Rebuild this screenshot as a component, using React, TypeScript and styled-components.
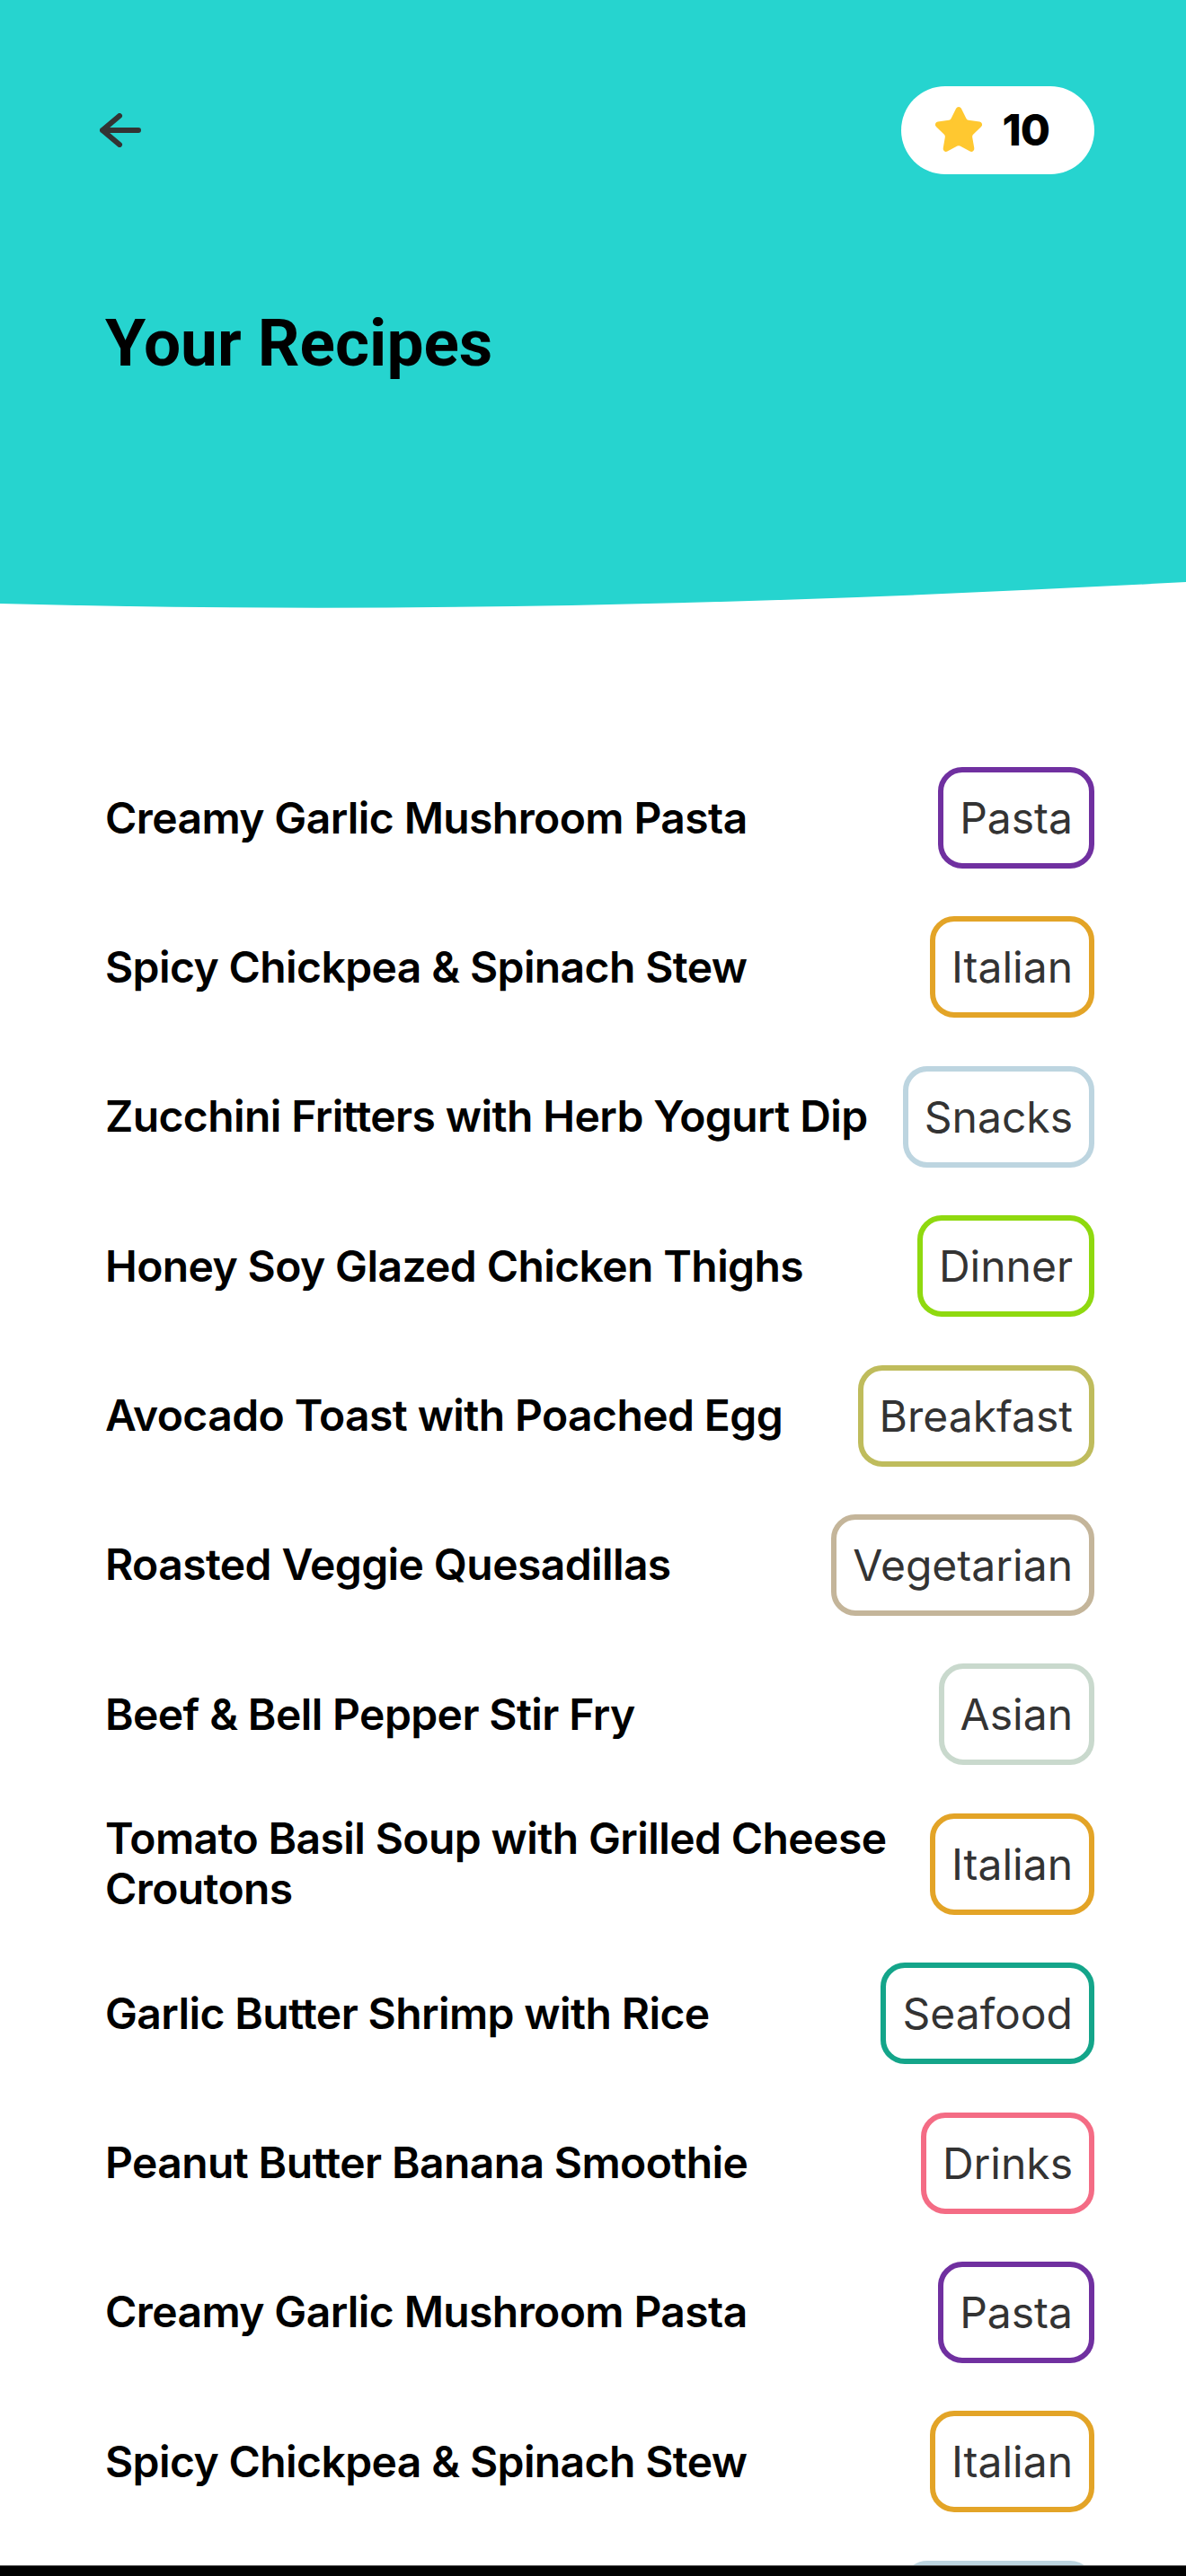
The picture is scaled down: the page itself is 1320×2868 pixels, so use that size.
import React from "react";
import styled, { createGlobalStyle } from "styled-components";

const GlobalStyle = createGlobalStyle`
  html, body {
    margin: 0;
    padding: 0;
    background: #ffffff;
  }
  * { box-sizing: border-box; }
`;

const Page = styled.div`
  position: relative;
  height: 100vh;
  overflow: hidden;
  background: #ffffff;
  font-family: Inter, "Noto Sans", sans-serif;
`;

const Header = styled.header`
  background: #26d4cf;
  padding: 96px 102px 222px 117px;
`;

const TopBar = styled.div`
  display: flex;
  align-items: center;
  justify-content: space-between;
`;

const BackButton = styled.button`
  display: flex;
  align-items: center;
  justify-content: center;
  margin-left: -6px;
  padding: 0;
  border: none;
  background: transparent;
  cursor: pointer;
`;

const PointsBadge = styled.div`
  display: flex;
  align-items: center;
  gap: 20px;
  height: 98px;
  padding: 0 50px 0 35px;
  border-radius: 49px;
  background: #ffffff;
`;

const PointsValue = styled.span`
  font-family: Inter, sans-serif;
  font-weight: 800;
  font-size: 48px;
  letter-spacing: -1px;
  color: #000000;
  line-height: 1;
`;

const Title = styled.h1`
  margin: 144px 0 0;
  font-family: Roboto, "Liberation Sans", sans-serif;
  font-weight: 700;
  font-size: 73px;
  line-height: 88px;
  color: #000000;
`;

const Wave = styled.svg`
  display: block;
  width: 100%;
  height: 36px;
`;

const List = styled.ul`
  list-style: none;
  margin: 0;
  padding: 170px 102px 0 117px;
  display: flex;
  flex-direction: column;
  gap: 53.4px;
`;

const Row = styled.li`
  display: flex;
  align-items: center;
  justify-content: space-between;
  gap: 16px;
  min-height: 113px;
`;

const RecipeName = styled.span`
  font-family: Inter, sans-serif;
  font-weight: 600;
  font-size: 48px;
  letter-spacing: -0.6px;
  line-height: 56px;
  color: #000000;
`;

const Chip = styled.span<{ $color: string }>`
  flex-shrink: 0;
  display: flex;
  align-items: center;
  justify-content: center;
  height: 113px;
  padding: 0 18px;
  border: 6px solid ${(p) => p.$color};
  border-radius: 27px;
  font-family: Inter, sans-serif;
  font-weight: 400;
  font-size: 48px;
  color: #333333;
`;

const NavStrip = styled.div`
  position: absolute;
  left: 0;
  right: 0;
  bottom: 0;
  height: 12px;
  background: #000000;
  border-top: 1px solid #555555;
`;

const categoryColors: Record<string, string> = {
  Pasta: "#7030a0",
  Italian: "#e3a427",
  Snacks: "#bdd5e0",
  Dinner: "#8fd90f",
  Breakfast: "#bfbc5c",
  Vegetarian: "#c4b59a",
  Asian: "#c9d9cd",
  Seafood: "#14a58a",
  Drinks: "#f46c85",
};

const baseRecipes: [string, string][] = [
  ["Creamy Garlic Mushroom Pasta", "Pasta"],
  ["Spicy Chickpea & Spinach Stew", "Italian"],
  ["Zucchini Fritters with Herb Yogurt Dip", "Snacks"],
  ["Honey Soy Glazed Chicken Thighs", "Dinner"],
  ["Avocado Toast with Poached Egg", "Breakfast"],
  ["Roasted Veggie Quesadillas", "Vegetarian"],
  ["Beef & Bell Pepper Stir Fry", "Asian"],
  ["Tomato Basil Soup with Grilled Cheese Croutons", "Italian"],
  ["Garlic Butter Shrimp with Rice", "Seafood"],
  ["Peanut Butter Banana Smoothie", "Drinks"],
];

const recipes = [...baseRecipes, ...baseRecipes];

const BackArrow = () => (
  <svg width="46" height="38" viewBox="0 0 46 38" fill="none">
    <path
      d="M22 3 L3 19 L22 35 M3 19 H43"
      stroke="#333333"
      strokeWidth="6"
      strokeLinecap="round"
      strokeLinejoin="round"
    />
  </svg>
);

const StarIcon = () => (
  <svg width="58" height="58" viewBox="0 0 24 24">
    <path
      d="M11.525 2.295a.53.53 0 0 1 .95 0l2.31 4.679a2.123 2.123 0 0 0 1.595 1.16l5.166.756a.53.53 0 0 1 .294.904l-3.736 3.638a2.123 2.123 0 0 0-.611 1.878l.882 5.14a.53.53 0 0 1-.771.56l-4.618-2.428a2.122 2.122 0 0 0-1.973 0L6.396 21.01a.53.53 0 0 1-.77-.56l.881-5.139a2.122 2.122 0 0 0-.611-1.879L2.16 9.795a.53.53 0 0 1 .294-.906l5.165-.755a2.122 2.122 0 0 0 1.597-1.16z"
      fill="#ffc830"
      stroke="#ffc830"
      strokeWidth="1.6"
      strokeLinejoin="round"
    />
  </svg>
);

export default function App() {
  return (
    <Page>
      <GlobalStyle />
      <Header>
        <TopBar>
          <BackButton aria-label="Back">
            <BackArrow />
          </BackButton>
          <PointsBadge>
            <StarIcon />
            <PointsValue>10</PointsValue>
          </PointsBadge>
        </TopBar>
        <Title>Your Recipes</Title>
      </Header>
      <Wave viewBox="0 0 1320 36" preserveAspectRatio="none">
        <path d="M0 0 H1320 C880 24 440 36 0 24 Z" fill="#26d4cf" />
      </Wave>
      <List>
        {recipes.map(([name, cat], i) => (
          <Row key={i}>
            <RecipeName>{name}</RecipeName>
            <Chip $color={categoryColors[cat]}>{cat}</Chip>
          </Row>
        ))}
      </List>
      <NavStrip />
    </Page>
  );
}
